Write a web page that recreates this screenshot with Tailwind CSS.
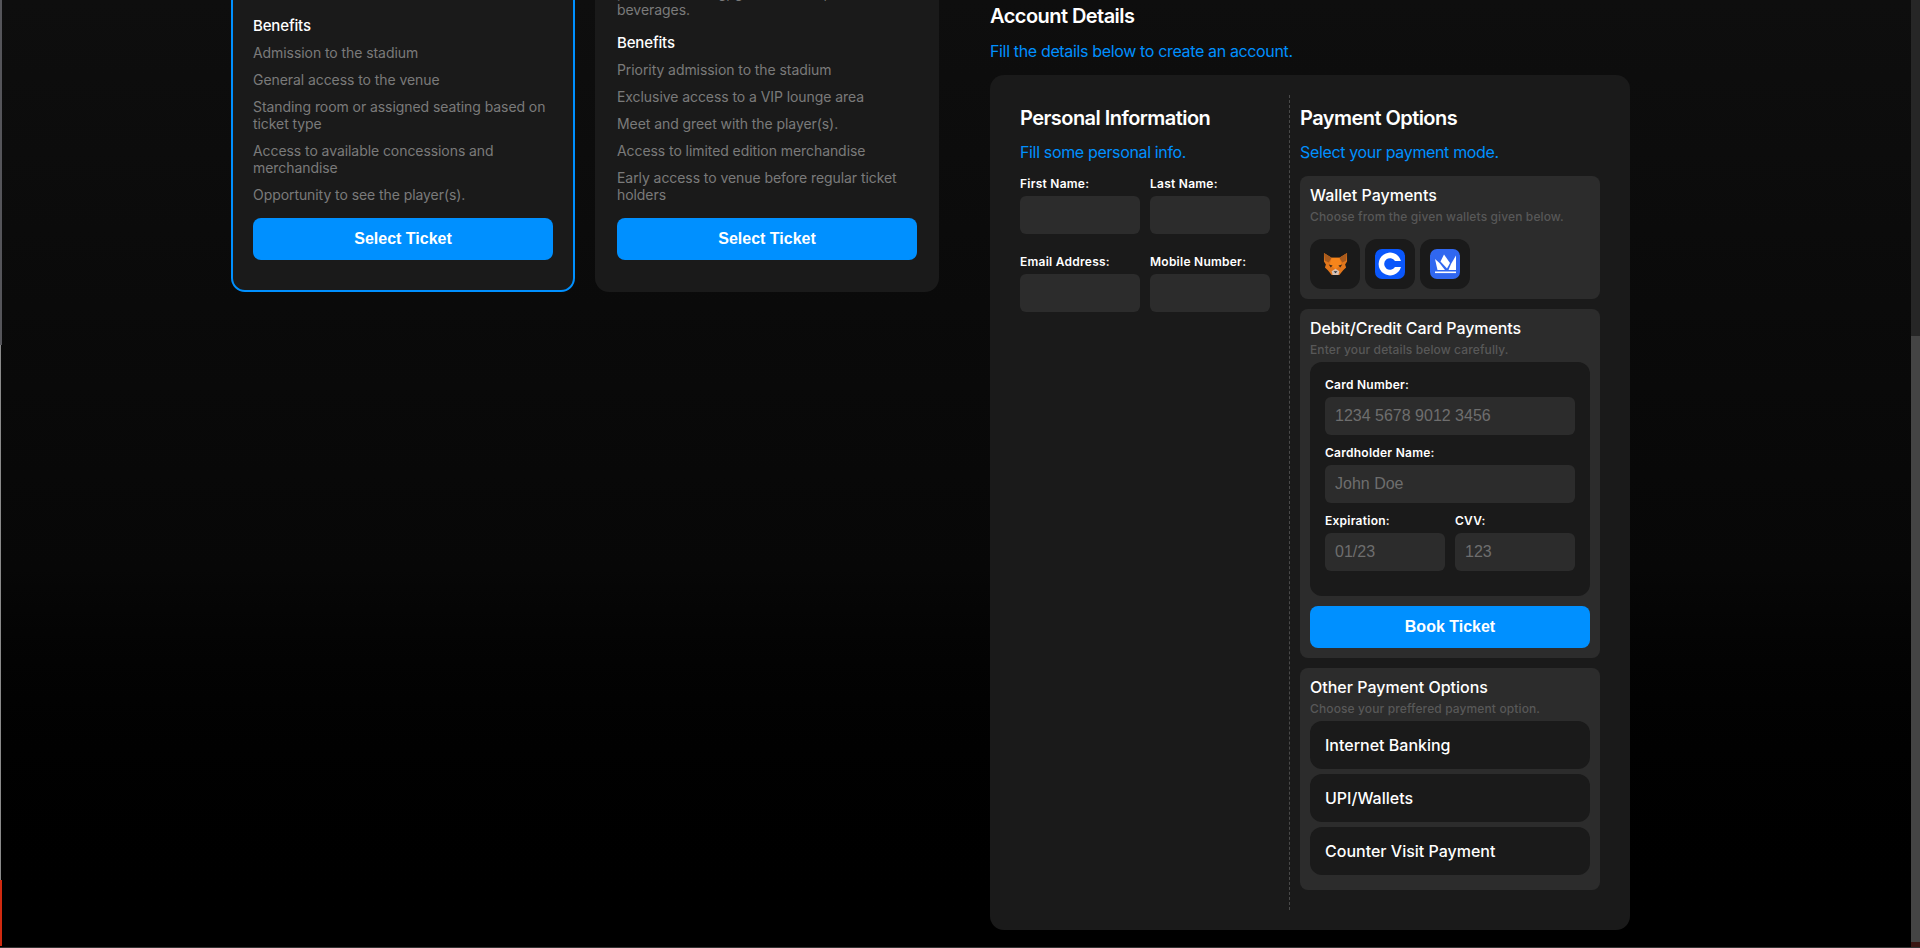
<!DOCTYPE html>
<html lang="en">
<head>
    <meta charset="UTF-8">
    <meta name="viewport" content="width=device-width, initial-scale=1.0">
    <title>Book Tickets</title>
    <script src="https://cdn.jsdelivr.net/npm/@tailwindcss/browser@4"></script>
</head>
<body class="relative h-[948px] overflow-hidden bg-linear-to-b from-[#0e0e0e] via-[#070707] via-60% to-black font-['Inter','Liberation_Sans',sans-serif] text-white">
    <!-- window edges and scrollbar -->
    <div class="absolute left-0 top-0 h-[345px] w-[2px] bg-[#55555a]"></div>
    <div class="absolute left-0 top-[345px] h-[535px] w-[1px] bg-[#8a8a8a]"></div>
    <div class="absolute left-0 top-[880px] h-[66px] w-[2px] bg-[#d02a10]"></div>
    <div class="absolute right-0 top-0 h-[336px] w-[9px] bg-[#262626]"></div>
    <div class="absolute right-0 top-[336px] h-[606px] w-[9px] bg-[#444444]"></div>
    <div class="absolute right-0 bottom-0 h-[6px] w-[9px] bg-[#3a1512]"></div>
    <div class="absolute right-0 bottom-0 left-0 h-[1px] bg-[#333333]"></div>

    <main class="flex items-start pl-[231px]">
        <!-- ticket cards -->
        <section class="-mt-[55px] mr-[51px] flex gap-[20px]">
            <article class="w-[344px] rounded-[14px] border-2 border-[#0090ff] bg-[#1a1a1a] p-[20px]">
                <p class="mb-[17px] text-[14px] leading-[16px] text-[#7a7a7a]">Watch the player live from the stadium with general admission seating.</p>
                <h3 class="mb-[8px] text-[15px] leading-[20px] font-medium tracking-[-0.15px]">Benefits</h3>
                <ul class="text-[14px] leading-[17px] tracking-[-0.07px] text-[#7a7a7a]">
                    <li class="mb-[10px]">Admission to the stadium</li>
                    <li class="mb-[10px]">General access to the venue</li>
                    <li class="mb-[10px]">Standing room or assigned seating based on ticket type</li>
                    <li class="mb-[10px]">Access to available concessions and merchandise</li>
                    <li class="mb-[10px]">Opportunity to see the player(s).</li>
                </ul>
                <button class="mt-[5px] mb-[10px] h-[42px] w-full rounded-[8px] bg-[#0090ff] font-['Liberation_Sans',sans-serif] text-[16px] font-bold">Select Ticket</button>
            </article>
            <article class="w-[344px] rounded-[14px] border-2 border-transparent bg-[#1a1a1a] p-[20px]">
                <p class="mb-[15px] text-[14px] leading-[17px] tracking-[-0.05px] text-[#7a7a7a]">Access to the match with a private lounge,<br>premium seating, gourmet food, and<br>beverages.</p>
                <h3 class="mb-[8px] text-[15px] leading-[20px] font-medium tracking-[-0.15px]">Benefits</h3>
                <ul class="text-[14px] leading-[17px] tracking-[-0.07px] text-[#7a7a7a]">
                    <li class="mb-[10px]">Priority admission to the stadium</li>
                    <li class="mb-[10px]">Exclusive access to a VIP lounge area</li>
                    <li class="mb-[10px]">Meet and greet with the player(s).</li>
                    <li class="mb-[10px]">Access to limited edition merchandise</li>
                    <li class="mb-[10px]">Early access to venue before regular ticket holders</li>
                </ul>
                <button class="mt-[5px] mb-[10px] h-[42px] w-full rounded-[8px] bg-[#0090ff] font-['Liberation_Sans',sans-serif] text-[16px] font-bold">Select Ticket</button>
            </article>
        </section>

        <!-- account details -->
        <section class="w-[640px]">
            <h2 class="text-[20px] leading-[32px] font-semibold tracking-[-0.55px]">Account Details</h2>
            <p class="mt-[9px] mb-[14px] text-[16px] leading-[20px] tracking-[-0.35px] text-[#0090ff]">Fill the details below to create an account.</p>

            <div class="flex rounded-[14px] bg-[#1a1a1a] px-[30px] py-[20px]">
                <!-- personal info -->
                <div class="w-[250px]">
                    <h3 class="mt-[11px] text-[20px] leading-[24px] font-semibold tracking-[-0.55px]">Personal Information</h3>
                    <p class="mt-[12px] mb-[15px] text-[16px] leading-[20px] tracking-[-0.35px] text-[#0090ff]">Fill some personal info.</p>
                    <div class="grid grid-cols-2 gap-x-[10px] gap-y-[21px]">
                        <label class="block text-[12px] leading-[14px] font-semibold tracking-[0.25px]">First Name:
                            <input type="text" class="mt-[5px] block h-[38px] w-full rounded-[6px] bg-[#2c2c2c]">
                        </label>
                        <label class="block text-[12px] leading-[14px] font-semibold tracking-[0.25px]">Last Name:
                            <input type="text" class="mt-[5px] block h-[38px] w-full rounded-[6px] bg-[#2c2c2c]">
                        </label>
                        <label class="block text-[12px] leading-[14px] font-semibold tracking-[0.25px]">Email Address:
                            <input type="text" class="mt-[5px] block h-[38px] w-full rounded-[6px] bg-[#2c2c2c]">
                        </label>
                        <label class="block text-[12px] leading-[14px] font-semibold tracking-[0.25px]">Mobile Number:
                            <input type="text" class="mt-[5px] block h-[38px] w-full rounded-[6px] bg-[#2c2c2c]">
                        </label>
                    </div>
                </div>

                <!-- payment options -->
                <div class="ml-[19px] w-[311px] border-l border-dashed border-[#4a4a4a] pb-[20px] pl-[10px]">
                    <h3 class="mt-[11px] text-[20px] leading-[24px] font-semibold tracking-[-0.55px]">Payment Options</h3>
                    <p class="mt-[12px] mb-[14px] text-[16px] leading-[20px] tracking-[-0.35px] text-[#0090ff]">Select your payment mode.</p>

                    <div class="rounded-[8px] bg-[#2c2c2c] p-[10px]">
                        <h4 class="text-[16px] leading-[18px] font-medium">Wallet Payments</h4>
                        <p class="mt-[6px] text-[12px] leading-[14px] font-medium tracking-[0.12px] text-[#585858]">Choose from the given wallets given below.</p>
                        <div class="mt-[15px] flex gap-[5px]">
                            <div class="flex h-[50px] w-[50px] items-center justify-center rounded-[12px] bg-[#1a1a1a]">
                                <svg width="25" height="25" viewBox="0 0 26 26">
                                    <polygon points="1,1 9,6 17,6 25,1 25,10 23,13 24,16 21,19 17,24 9,24 5,19 2,16 3,13 1,10" fill="#e2761b"/>
                                    <polygon points="1,1 9,6 6,11 2,9" fill="#a85a1c"/>
                                    <polygon points="25,1 17,6 20,11 24,9" fill="#a85a1c"/>
                                    <polygon points="9,6 17,6 19,13 13,18 7,13" fill="#f6851b"/>
                                    <polygon points="6,13 10,14 8,16" fill="#3d2a1a"/>
                                    <polygon points="20,13 16,14 18,16" fill="#3d2a1a"/>
                                    <polygon points="9,20 13,17.5 17,20 16,24 10,24" fill="#d7c1b3"/>
                                    <polygon points="11,20 15,20 13,22" fill="#233447"/>
                                </svg>
                            </div>
                            <div class="flex h-[50px] w-[50px] items-center justify-center rounded-[12px] bg-[#1a1a1a]">
                                <svg width="30" height="30" viewBox="0 0 30 30">
                                    <rect width="30" height="30" rx="7" fill="#0a57fb"/>
                                    <path d="M26 12A11.4 11.4 0 1 0 26 18H20A5.83 5.83 0 1 1 20 12Z" fill="#fff"/>
                                </svg>
                            </div>
                            <div class="flex h-[50px] w-[50px] items-center justify-center rounded-[12px] bg-[#1a1a1a]">
                                <svg width="30" height="30" viewBox="0 0 30 30">
                                    <rect width="30" height="30" rx="7" fill="#3067f0"/>
                                    <polygon points="5,10 9.5,14 15,21 7.5,21" fill="#fff"/>
                                    <polygon points="10.5,12.5 14,5.5 20,14 17,19.5" fill="#fff"/>
                                    <polygon points="18.5,21 21,15 26,6.5 26,21" fill="#fff"/>
                                    <rect x="5" y="22.5" width="21" height="1.6" fill="#fff"/>
                                </svg>
                            </div>
                        </div>
                    </div>

                    <div class="mt-[10px] rounded-[8px] bg-[#2c2c2c] p-[10px]">
                        <h4 class="text-[16px] leading-[18px] font-medium tracking-[-0.08px]">Debit/Credit Card Payments</h4>
                        <p class="mt-[6px] text-[12px] leading-[14px] font-medium tracking-[0.12px] text-[#585858]">Enter your details below carefully.</p>
                        <div class="mt-[5px] rounded-[12px] bg-[#1a1a1a] px-[15px] pt-[16px] pb-[25px]">
                            <label class="block text-[12px] leading-[14px] font-semibold tracking-[0.25px]">Card Number:
                                <input type="text" placeholder="1234 5678 9012 3456" class="mt-[5px] block h-[38px] w-full rounded-[6px] bg-[#2c2c2c] px-[10px] font-['Liberation_Sans',sans-serif] text-[16px] font-normal tracking-normal placeholder:text-[#6e6e6e]">
                            </label>
                            <label class="mt-[11px] block text-[12px] leading-[14px] font-semibold tracking-[0.25px]">Cardholder Name:
                                <input type="text" placeholder="John Doe" class="mt-[5px] block h-[38px] w-full rounded-[6px] bg-[#2c2c2c] px-[10px] font-['Liberation_Sans',sans-serif] text-[16px] font-normal tracking-normal placeholder:text-[#6e6e6e]">
                            </label>
                            <div class="mt-[11px] grid grid-cols-2 gap-[10px]">
                                <label class="block text-[12px] leading-[14px] font-semibold tracking-[0.25px]">Expiration:
                                    <input type="text" placeholder="01/23" class="mt-[5px] block h-[38px] w-full rounded-[6px] bg-[#2c2c2c] px-[10px] font-['Liberation_Sans',sans-serif] text-[16px] font-normal tracking-normal placeholder:text-[#6e6e6e]">
                                </label>
                                <label class="block text-[12px] leading-[14px] font-semibold tracking-[0.25px]">CVV:
                                    <input type="text" placeholder="123" class="mt-[5px] block h-[38px] w-full rounded-[6px] bg-[#2c2c2c] px-[10px] font-['Liberation_Sans',sans-serif] text-[16px] font-normal tracking-normal placeholder:text-[#6e6e6e]">
                                </label>
                            </div>
                        </div>
                        <button class="mt-[10px] block h-[42px] w-full rounded-[8px] bg-[#0090ff] font-['Liberation_Sans',sans-serif] text-[16px] font-bold">Book Ticket</button>
                    </div>

                    <div class="mt-[10px] rounded-[8px] bg-[#2c2c2c] px-[10px] pt-[10px] pb-[15px]">
                        <h4 class="text-[16px] leading-[18px] font-medium">Other Payment Options</h4>
                        <p class="mt-[6px] text-[12px] leading-[14px] font-medium tracking-[0.12px] text-[#585858]">Choose your preffered payment option.</p>
                        <div class="mt-[5px] flex flex-col gap-[5px]">
                            <div class="flex h-[48px] items-center rounded-[12px] bg-[#1a1a1a] px-[15px] text-[16px] font-medium">Internet Banking</div>
                            <div class="flex h-[48px] items-center rounded-[12px] bg-[#1a1a1a] px-[15px] text-[16px] font-medium">UPI/Wallets</div>
                            <div class="flex h-[48px] items-center rounded-[12px] bg-[#1a1a1a] px-[15px] text-[16px] font-medium">Counter Visit Payment</div>
                        </div>
                    </div>
                </div>
            </div>
        </section>
    </main>
</body>
</html>
